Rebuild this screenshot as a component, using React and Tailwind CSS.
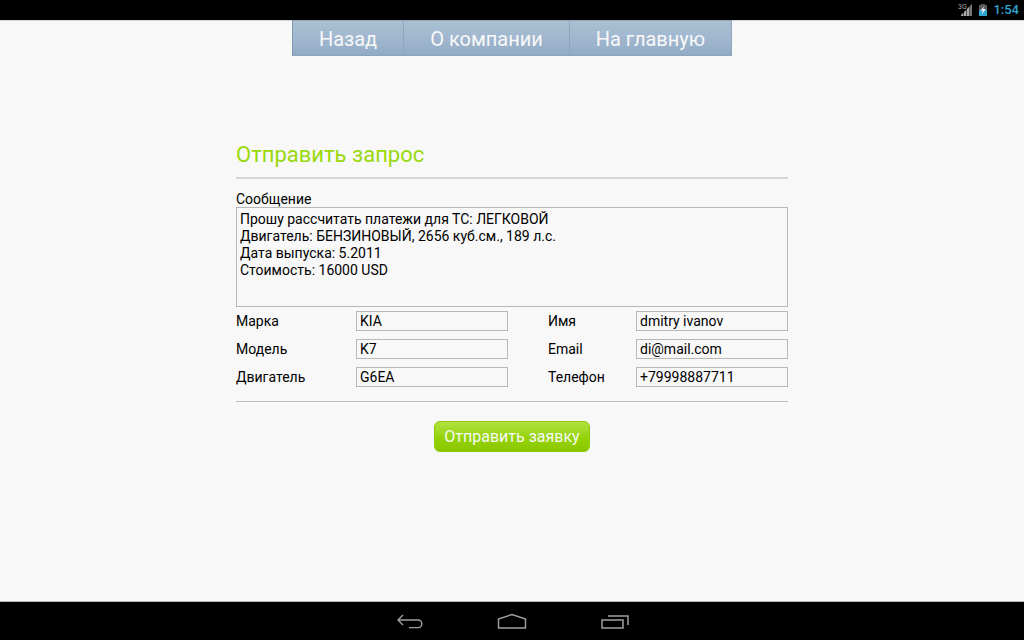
import React, { useState } from 'react';

const NAV_LINKS = ['Назад', 'О компании', 'На главную'];

const CAR_FIELDS = [
  { id: 'brand', label: 'Марка', type: 'text' },
  { id: 'model', label: 'Модель', type: 'text' },
  { id: 'engine', label: 'Двигатель', type: 'text' },
];

const CONTACT_FIELDS = [
  { id: 'name', label: 'Имя', type: 'text' },
  { id: 'email', label: 'Email', type: 'email' },
  { id: 'phone', label: 'Телефон', type: 'tel' },
];

const INITIAL_FORM = {
  message:
    'Прошу рассчитать платежи для ТС: ЛЕГКОВОЙ\nДвигатель: БЕНЗИНОВЫЙ, 2656 куб.см., 189 л.с.\nДата выпуска: 5.2011\nСтоимость: 16000 USD',
  brand: 'KIA',
  model: 'K7',
  engine: 'G6EA',
  name: 'dmitry ivanov',
  email: 'di@mail.com',
  phone: '+79998887711',
};

const StatusBar = () => (
  <div className="flex h-5 shrink-0 items-center justify-end bg-black pr-[5px]">
    {/* Signal */}
    <svg width="15" height="16" viewBox="0 0 15 16" className="mr-1.5" aria-hidden="true">
      <path d="M3 14 14 2v12z" fill="#555" />
      <path d="M3 14v-1l2-2v3zM6 14v-4l2-2v6zM9 14V7l2-2v9z" fill="#a8a8a8" />
      <path d="M12 14V4l2-2v12z" fill="#777" />
      <text x="0" y="7" fontSize="7" fill="#a8a8a8">3G</text>
    </svg>
    {/* Battery */}
    <svg width="8" height="14" viewBox="0 0 8 14" className="mr-1.5" aria-hidden="true">
      <path d="M2 1h4v1h2v5H0V2h2z" fill="#565c60" />
      <path d="M0 7h8v6H0z" fill="#33a5cf" />
      <path d="M5.500 3 1.500 7.500H4L2.500 11.500 6.800 6H4z" fill="#fff" />
    </svg>
    <span className="text-[13px] font-medium text-[#33a5cf]">1:54</span>
  </div>
);

const SystemNav = () => (
  <div className="flex h-[39px] shrink-0 items-center justify-center gap-[74px] border-t border-[#b5b8b8] bg-black text-[#a0a0a0]">
    <button type="button" aria-label="Back">
      <svg width="28" height="16" viewBox="0 0 28 16" fill="none" stroke="currentColor" strokeWidth="1.4">
        <path d="M8 2 3 7l5 5M3 7h20a3.800 3.800 0 0 1 0 7.600H14" />
      </svg>
    </button>
    <button type="button" aria-label="Home">
      <svg width="30" height="16" viewBox="0 0 30 16" fill="none" stroke="currentColor" strokeWidth="1.4">
        <path d="M1.500 15V6L15 1.500 28.500 6v9z" />
      </svg>
    </button>
    <button type="button" aria-label="Recent apps">
      <svg width="28" height="16" viewBox="0 0 28 16" fill="none" stroke="currentColor" strokeWidth="1.5">
        <path d="M1 7h21v8H1zM7 3h20v9" />
      </svg>
    </button>
  </div>
);

const Field = ({ field, value, onChange, labelClass }) => (
  <div className="flex h-7 items-center">
    <label htmlFor={field.id} className={labelClass}>
      {field.label}
    </label>
    <input
      id={field.id}
      type={field.type}
      value={value}
      onChange={onChange}
      className="h-5 w-[152px] border border-[#b8b8b8] bg-transparent px-[3px] outline-none"
    />
  </div>
);

const App = () => {
  const [form, setForm] = useState(INITIAL_FORM);

  const handleChange = (e) => {
    setForm({ ...form, [e.target.id]: e.target.value });
  };

  return (
    <div className="flex min-h-screen flex-col bg-[#f8f8f8] font-['Roboto',sans-serif] text-sm text-black">
      <StatusBar />

      <nav className="flex justify-center border-t border-[#d8d8d8]">
        <div className="-mt-px flex border-l border-[#8099b0]">
          {NAV_LINKS.map((link) => (
            <a
              key={link}
              href="#"
              className="border-t border-r border-b border-t-[#93a8bc] border-r-[#8fa5bb] border-b-[#8aa4be] bg-linear-to-b from-[#a9c1d1] via-[#a1b7d0] to-[#92abc4] px-[26px] pt-1 pb-0.5 text-xl text-[#f8f8f8]"
            >
              {link}
            </a>
          ))}
        </div>
      </nav>

      <main className="flex grow justify-center pt-[83px]">
        <form className="w-[552px]" onSubmit={(e) => e.preventDefault()}>
          <h1 className="border-b-2 border-[#d6d6d6] pb-1.5 text-[22px] leading-8 text-[#99d90b]">
            Отправить запрос
          </h1>

          <label htmlFor="message" className="mt-3 block leading-4">
            Сообщение
          </label>
          <textarea
            id="message"
            value={form.message}
            onChange={handleChange}
            className="block h-[100px] w-full resize-none border border-[#b8b8b8] bg-transparent px-[3px] py-[3px] leading-[17px] outline-none"
          />

          <div className="flex justify-between border-b border-[#bebebe] pb-2.5">
            <div>
              {CAR_FIELDS.map((field) => (
                <Field
                  key={field.id}
                  field={field}
                  value={form[field.id]}
                  onChange={handleChange}
                  labelClass="w-[120px]"
                />
              ))}
            </div>
            <div>
              {CONTACT_FIELDS.map((field) => (
                <Field
                  key={field.id}
                  field={field}
                  value={form[field.id]}
                  onChange={handleChange}
                  labelClass="w-[88px]"
                />
              ))}
            </div>
          </div>

          <div className="mt-[19px] flex justify-center">
            <button
              type="submit"
              className="rounded-md border border-[#8fc904] bg-linear-to-b from-[#b2e23c] via-[#96d40a] to-[#8bc700] px-[9px] py-0.5 text-base leading-[25px] text-[#f8f8f8]"
            >
              Отправить заявку
            </button>
          </div>
        </form>
      </main>

      <SystemNav />
    </div>
  );
};

export default App;
